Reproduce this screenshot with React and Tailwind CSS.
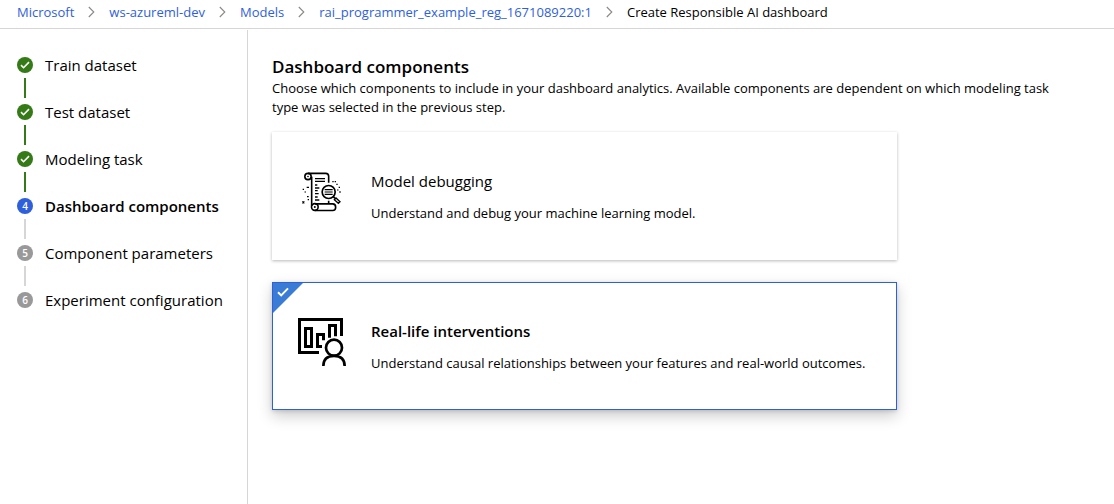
import React, { useState } from "react";

const crumbs = ["Microsoft", "ws-azureml-dev", "Models", "rai_programmer_example_reg_1671089220:1"];

const steps = [
  { label: "Train dataset", state: "done" },
  { label: "Test dataset", state: "done" },
  { label: "Modeling task", state: "done" },
  { label: "Dashboard components", state: "current" },
  { label: "Component parameters", state: "todo" },
  { label: "Experiment configuration", state: "todo" },
];

const badgeColor = { done: "bg-[#347a17]", current: "bg-[#305fdb]", todo: "bg-[#999999]" };

function Chevron() {
  return (
    <svg aria-hidden="true" className="h-3 w-[7px] shrink-0" viewBox="0 0 7 12" fill="none" stroke="#8a8886" strokeWidth="1.1">
      <path d="M.8 1 5.8 6 .8 11" />
    </svg>
  );
}

function Check({ className }) {
  return (
    <svg aria-hidden="true" className={className} viewBox="0 0 12 10" fill="none" stroke="white" strokeWidth="2">
      <path d="M1 5.2 4.2 8.4 11 1.4" />
    </svg>
  );
}

function ScrollIcon() {
  return (
    <svg aria-hidden="true" className="size-10" viewBox="36 36 120 120" fill="none" stroke="#000" strokeWidth="4.8">
      <circle cx="54" cy="49.5" r="9.5" />
      <circle cx="54" cy="49.5" r="2.5" fill="#000" stroke="none" />
      <path d="M54 40h53q9 0 9 9v19" />
      <path d="M65 50v88" />
      <circle cx="74.500" cy="141" r="10" />
      <circle cx="74.500" cy="141" r="3" fill="#000" stroke="none" />
      <path d="M75 131.500h53q9 0 9 10t-9 10H75M116 122v9" />
      <path d="M75 56h30M75 64h30" strokeWidth="4" />
      <path d="M75 75h7M75 84h13M75 92h8M75 101h11M75 111h8M75 120h13" strokeWidth="4" />
      <circle cx="116" cy="96" r="19.500" fill="white" strokeWidth="5" />
      <path d="M104 89h24M104 96h24M104 103h24" strokeWidth="3.500" />
      <path d="m130 110 5 5" />
      <path d="m133 119 5-5 12 11-5 5z" fill="white" strokeWidth="4" />
      <path d="M127 65h4M134 65h4M139 73h4M146 82h4M148 96h4M142 90h3M38 88h4M50 82h7M44 96h3M51 110h5M53 119h4" strokeWidth="4" />
      <path d="m37 124 6 6m0-6-6 6" strokeWidth="3.500" />
    </svg>
  );
}

function ChartPersonIcon() {
  return (
    <svg aria-hidden="true" className="size-[50px]" viewBox="99 126 150 150" fill="none" stroke="#000" strokeWidth="9">
      <path d="M165 232.500h-58.500v-99h126V183" />
      <path d="M124.500 160.500h18v54h-18z" />
      <path d="M178.500 196v-17.500h-18v36H174" />
      <path d="M196.500 188v-36.500h18V184" />
      <circle cx="210" cy="218" r="24" strokeWidth="8" />
      <path d="M178 273q0-30 32-30t32 30" strokeWidth="8" />
    </svg>
  );
}

const options = [
  {
    title: "Model debugging",
    text: "Understand and debug your machine learning model.",
    Icon: ScrollIcon,
  },
  {
    title: "Real-life interventions",
    text: "Understand causal relationships between your features and real-world outcomes.",
    Icon: ChartPersonIcon,
  },
];

function OptionCard({ title, text, Icon, selected, onSelect }) {
  return (
    <button
      type="button"
      aria-pressed={selected}
      onClick={onSelect}
      className={
        "relative flex min-h-32 w-full max-w-[625px] items-center gap-6 border bg-white px-6 py-4 text-left " +
        (selected
          ? "border-[#305fdb] shadow-[0_6px_14px_rgba(0,0,0,0.2),0_1px_4px_rgba(0,0,0,0.15)]"
          : "border-transparent shadow-[0_1px_3px_rgba(0,0,0,0.28)]")
      }
    >
      {selected && (
        <span className="absolute top-0 left-0 size-[30px] bg-[#3a7bd5] [clip-path:polygon(0_0,100%_0,0_100%)]">
          <Check className="mt-1 ml-1 h-[10px] w-3" />
        </span>
      )}
      <span className="flex w-[50px] shrink-0 justify-center pb-2">
        <Icon />
      </span>
      <span className="flex flex-col gap-[10px]">
        <span className={"text-[15px] leading-6 " + (selected ? "font-semibold" : "")}>{title}</span>
        <span className="text-[13px] leading-5">{text}</span>
      </span>
    </button>
  );
}

export default function App() {
  const [selected, setSelected] = useState(1);
  return (
    <div className="flex min-h-screen flex-col bg-white font-['Open_Sans','Noto_Sans',sans-serif] text-black">
      <nav aria-label="Breadcrumb" className="border-b border-[#d6d6d6]">
        <ol className="flex items-center gap-[14px] px-[17px] pt-px pb-[5px] text-[13px] leading-[22px]">
          {crumbs.map((name) => (
            <li key={name} className="flex items-center gap-[14px]">
              <a href="#" className="text-[#305fdb]">
                {name}
              </a>
              <Chevron />
            </li>
          ))}
          <li aria-current="page">Create Responsible AI dashboard</li>
        </ol>
      </nav>

      <div className="mt-px flex flex-1">
        <ol aria-label="Steps" className="w-62 shrink-0 border-r border-[#d6d6d6] px-[17px] pt-[23px]">
          {steps.map(({ label, state }, i) => (
            <li key={label} aria-current={state === "current" ? "step" : undefined} className="flex h-[47px] gap-3">
              <span className="flex w-4 shrink-0 flex-col items-center gap-[5px] pt-1">
                <span
                  className={
                    "flex size-4 shrink-0 items-center justify-center rounded-full text-[10px] leading-4 font-semibold text-white " +
                    badgeColor[state]
                  }
                >
                  {state === "done" ? <Check className="h-2 w-[10px]" /> : i + 1}
                </span>
                {i < steps.length - 1 && (
                  <span className={"h-5 w-0.5 " + (state === "done" ? "bg-[#347a17]" : "bg-[#d6d6d6]")} />
                )}
              </span>
              <span className={"text-[15px] leading-6 whitespace-nowrap " + (state === "current" ? "font-semibold" : "")}>
                {label}
              </span>
            </li>
          ))}
        </ol>

        <main className="min-w-0 flex-1 px-6 pt-[25px]">
          <h1 className="text-[17px] leading-6 font-semibold">Dashboard components</h1>
          <p className="max-w-[800px] text-[13px] leading-[19px]">
            Choose which components to include in your dashboard analytics. Available components are dependent on which
            modeling task type was selected in the previous step.
          </p>
          <div className="mt-[15px] flex flex-col gap-[22px]">
            {options.map((option, i) => (
              <OptionCard key={option.title} {...option} selected={selected === i} onSelect={() => setSelected(i)} />
            ))}
          </div>
        </main>
      </div>
    </div>
  );
}
